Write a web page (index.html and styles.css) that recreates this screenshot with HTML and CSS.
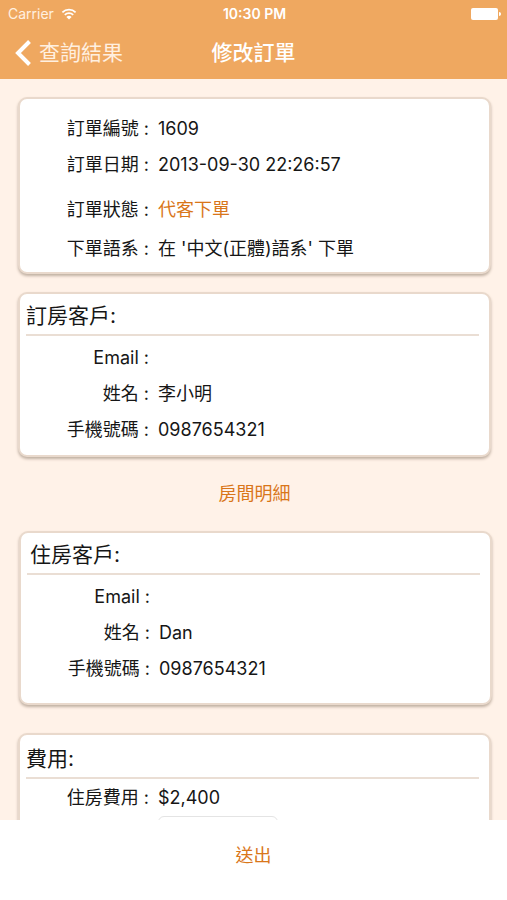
FILE: index.html
```html
<!DOCTYPE html>
<html lang="zh-Hant">
<head>
<meta charset="utf-8">
<meta name="viewport" content="width=device-width, initial-scale=1">
<title>修改訂單</title>
<link rel="stylesheet" href="styles.css">
</head>
<body>
<div class="app">
  <header class="top">
    <div class="status">
      <span class="carrier">Carrier
        <svg class="wifi" viewBox="0 0 16 12" aria-hidden="true">
          <path d="M1.400 4.300a9.600 9.600 0 0 1 13.200 0M3.800 6.900a6.100 6.100 0 0 1 8.400 0" fill="none" stroke="currentColor" stroke-width="1.800"/>
          <path d="M8 11.600 5.400 8.900a3.800 3.800 0 0 1 5.200 0z" fill="currentColor"/>
        </svg>
      </span>
      <span class="clock">10:30 PM</span>
      <svg class="battery" viewBox="0 0 30 12" aria-hidden="true">
        <rect width="27" height="12" rx="2" fill="currentColor"/>
        <path d="M28 4c1.200 0 2 .9 2 2s-.8 2-2 2z" fill="currentColor"/>
      </svg>
    </div>
    <nav class="bar">
      <a class="back" href="#">
        <svg class="chevron" viewBox="0 0 16 26" aria-hidden="true"><path d="M14.500 1.500 3 13l11.500 11.500" fill="none" stroke="currentColor" stroke-width="4"/></svg>
        查詢結果
      </a>
      <h1 class="title">修改訂單</h1>
    </nav>
  </header>

  <main class="content">
    <section class="card summary">
      <dl class="rows">
        <div class="row"><dt>訂單編號 :</dt><dd>1609</dd></div>
        <div class="row"><dt>訂單日期 :</dt><dd>2013-09-30 22:26:57</dd></div>
      </dl>
      <dl class="rows loose">
        <div class="row"><dt>訂單狀態 :</dt><dd class="accent">代客下單</dd></div>
        <div class="row"><dt>下單語系 :</dt><dd>在 '中文(正體)語系' 下單</dd></div>
      </dl>
    </section>

    <section class="card booker">
      <h2 class="heading">訂房客戶:</h2>
      <dl class="rows">
        <div class="row"><dt>Email :</dt><dd></dd></div>
        <div class="row"><dt>姓名 :</dt><dd>李小明</dd></div>
        <div class="row"><dt>手機號碼 :</dt><dd>0987654321</dd></div>
      </dl>
    </section>

    <button class="link detail" type="button">房間明細</button>

    <section class="card guest">
      <h2 class="heading">住房客戶:</h2>
      <dl class="rows">
        <div class="row"><dt>Email :</dt><dd></dd></div>
        <div class="row"><dt>姓名 :</dt><dd>Dan</dd></div>
        <div class="row"><dt>手機號碼 :</dt><dd>0987654321</dd></div>
      </dl>
    </section>

    <section class="card fees">
      <h2 class="heading">費用:</h2>
      <dl class="rows">
        <div class="row"><dt>住房費用 :</dt><dd>$2,400</dd></div>
        <div class="row"><dt></dt><dd><input class="amount" type="text" aria-label="金額"></dd></div>
      </dl>
    </section>
  </main>

  <footer class="bottom">
    <button class="link submit" type="button">送出</button>
  </footer>
</div>
</body>
</html>
```
FILE: styles.css
```css
* { box-sizing: border-box; }

body {
  margin: 0;
  background: #fff2e8;
  color: #161616;
  font: 18px/36px Inter, "Noto Sans CJK TC", sans-serif;
}

h1, h2, dl, dd { margin: 0; font-weight: 400; }

.app {
  display: flex;
  flex-direction: column;
  height: 100vh;
}

.top {
  flex: none;
  background: #efa860;
  color: #fff;
  padding-bottom: 6px;
}

.status {
  display: grid;
  grid-template-columns: 1fr auto 1fr;
  align-items: center;
  height: 27px;
  padding: 0 6px 0 8px;
  font-size: 14px;
  line-height: 27px;
}

.carrier {
  display: flex;
  align-items: center;
  gap: 7px;
  color: #fff0e0;
}

.wifi { width: 16px; height: 12px; color: #fff; }
.clock { font-weight: 600; }
.battery { width: 30px; height: 12px; justify-self: end; }

.bar {
  display: grid;
  grid-template-columns: 1fr auto 1fr;
  align-items: center;
  height: 46px;
  padding: 6px 15px 0;
}

.back {
  display: flex;
  align-items: center;
  gap: 8px;
  color: #fff0e0;
  font-size: 21px;
  text-decoration: none;
}

.chevron { width: 16px; height: 26px; color: #fff; }
.title { font-size: 21px; font-weight: 500; }

.content {
  flex: 1;
  min-height: 0;
  display: flex;
  flex-direction: column;
  overflow-y: auto;
  scrollbar-width: none;
  padding: 18px 16px 18px 18px;
}

.card {
  flex: none;
  background: #fff;
  border: 2px solid #e9d9cc;
  border-radius: 9px;
  box-shadow: 0 2px 3px #c0b0a2;
}

.summary { padding: 12px 0 5px; }
.booker { margin-top: 18px; padding-bottom: 7px; }
.guest { margin: 19px -1px 0 1px; padding-bottom: 16px; }
.fees { margin-top: 28px; padding-bottom: 12px; }

.heading {
  margin: 0 10px 4px 6px;
  padding-top: 4px;
  border-bottom: 2px solid #eaded4;
  font-size: 21px;
}

.guest .heading { padding-left: 3px; }
.fees .heading { padding-top: 6px; margin-bottom: 1px; }

.row {
  display: grid;
  grid-template-columns: 129px 1fr;
  column-gap: 9px;
}

.row dt { text-align: right; }
.loose { display: grid; row-gap: 3px; margin-top: 9px; }
.accent { color: #d9761a; }

.amount {
  display: block;
  width: 120px;
  height: 36px;
  border: 1px solid #e4e4e4;
  border-radius: 6px;
  font: inherit;
}

.link {
  border: 0;
  padding: 0 12px;
  background: none;
  color: #d9761a;
  font: inherit;
  cursor: pointer;
}

.detail { align-self: center; margin-top: 19px; }

.bottom {
  flex: none;
  display: flex;
  justify-content: center;
  padding: 18px 0 26px;
  background: #fff;
}
```
